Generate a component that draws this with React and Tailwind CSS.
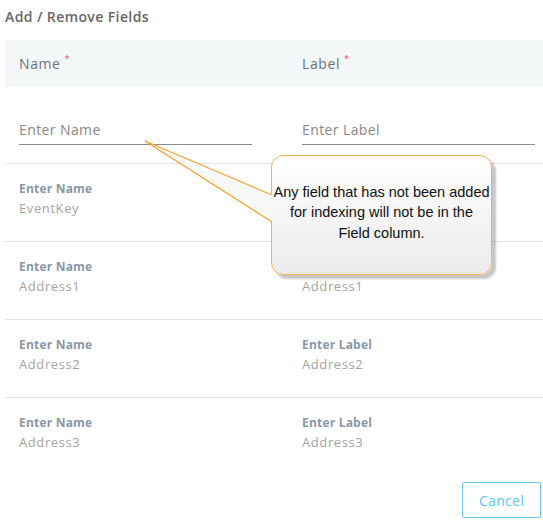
import React from 'react';

const rows = [
  { name: 'EventKey', label: 'EventKey' },
  { name: 'Address1', label: 'Address1' },
  { name: 'Address2', label: 'Address2' },
  { name: 'Address3', label: 'Address3' },
];

function Callout() {
  return (
    <div className="absolute left-0 top-0 w-[543px] h-[300px] pointer-events-none">
      {/* bubble */}
      <div className="absolute left-[271px] top-[155px] w-[221px] h-[120px] rounded-[12px] border border-[#f7b15a] bg-gradient-to-b from-white to-[#ebebeb] shadow-[4px_4px_2px_rgba(0,0,0,0.22)] flex items-center justify-center">
        <p className="whitespace-nowrap text-center text-[14.5px] leading-[20.5px] text-[#111] font-['Liberation_Sans',Arial,sans-serif] -mt-[5px]">
          Any field that has not been added<br />
          for indexing will not be in the<br />
          Field column.
        </p>
      </div>
      {/* tail */}
      <svg className="absolute left-0 top-0" width="300" height="300" viewBox="0 0 300 300">
        <polygon points="145,141 274,195 274,223" fill="#f8f8f8" />
        <polyline points="272,195 145,141 272,222" fill="none" stroke="#f5a030" strokeWidth="1.2" />
      </svg>
    </div>
  );
}

export default function App() {
  return (
    <div className="relative w-[543px] h-[528px] bg-white font-['Open_Sans',sans-serif] overflow-hidden">
      <div className="pl-[5px]">
        {/* Title */}
        <h1 className="pt-[6px] h-[40px] text-[14px] font-semibold text-[#666] tracking-[0.4px]">Add / Remove Fields</h1>

        {/* Header band */}
        <div className="h-[47px] bg-[#f4f7f8] grid grid-cols-[283px_1fr] pl-[14px] items-center text-[14px] text-[#6b7280] tracking-[0.6px]">
          <div className="flex items-start">
            Name<span className="text-[#f43f5e] text-[9px] ml-[4px] -mt-[1px]">*</span>
          </div>
          <div className="flex items-start">
            Label<span className="text-[#f43f5e] text-[9px] ml-[4px] -mt-[1px]">*</span>
          </div>
        </div>

        {/* Input row */}
        <div className="h-[77px] grid grid-cols-[283px_1fr] pl-[14px] pt-[32px] border-b border-[#e2e2e2]">
          <div className="w-[233px] h-[26px] border-b border-[#8a8a8a] text-[14px] text-[#888] tracking-[0.4px]">Enter Name</div>
          <div className="w-[233px] h-[26px] border-b border-[#8a8a8a] text-[14px] text-[#888] tracking-[0.4px]">Enter Label</div>
        </div>

        {/* Rows */}
        {rows.map((r, i) => (
          <div
            key={r.name}
            className={`h-[78px] grid grid-cols-[283px_1fr] pl-[14px] pt-[16px] ${i < rows.length - 1 ? 'border-b border-[#e2e2e2]' : ''}`}
          >
            <div>
              <div className="text-[12px] font-bold text-[#8b96a8] leading-[18px] tracking-[0.2px]">Enter Name</div>
              <div className="text-[13px] text-[#a3a3a3] leading-[20px] tracking-[0.6px]">{r.name}</div>
            </div>
            <div>
              <div className="text-[12px] font-bold text-[#8b96a8] leading-[18px] tracking-[0.2px]">Enter Label</div>
              <div className="text-[13px] text-[#a3a3a3] leading-[20px] tracking-[0.6px]">{r.label}</div>
            </div>
          </div>
        ))}

        {/* Footer */}
        <div className="flex justify-end pr-[2px] pt-[6px]">
          <button className="w-[79px] h-[36px] border border-[#6ccdf5] rounded-[2px] text-[14px] font-medium text-[#5cc6f2] tracking-[0.3px]">
            Cancel
          </button>
        </div>
      </div>

      <Callout />
    </div>
  );
}
